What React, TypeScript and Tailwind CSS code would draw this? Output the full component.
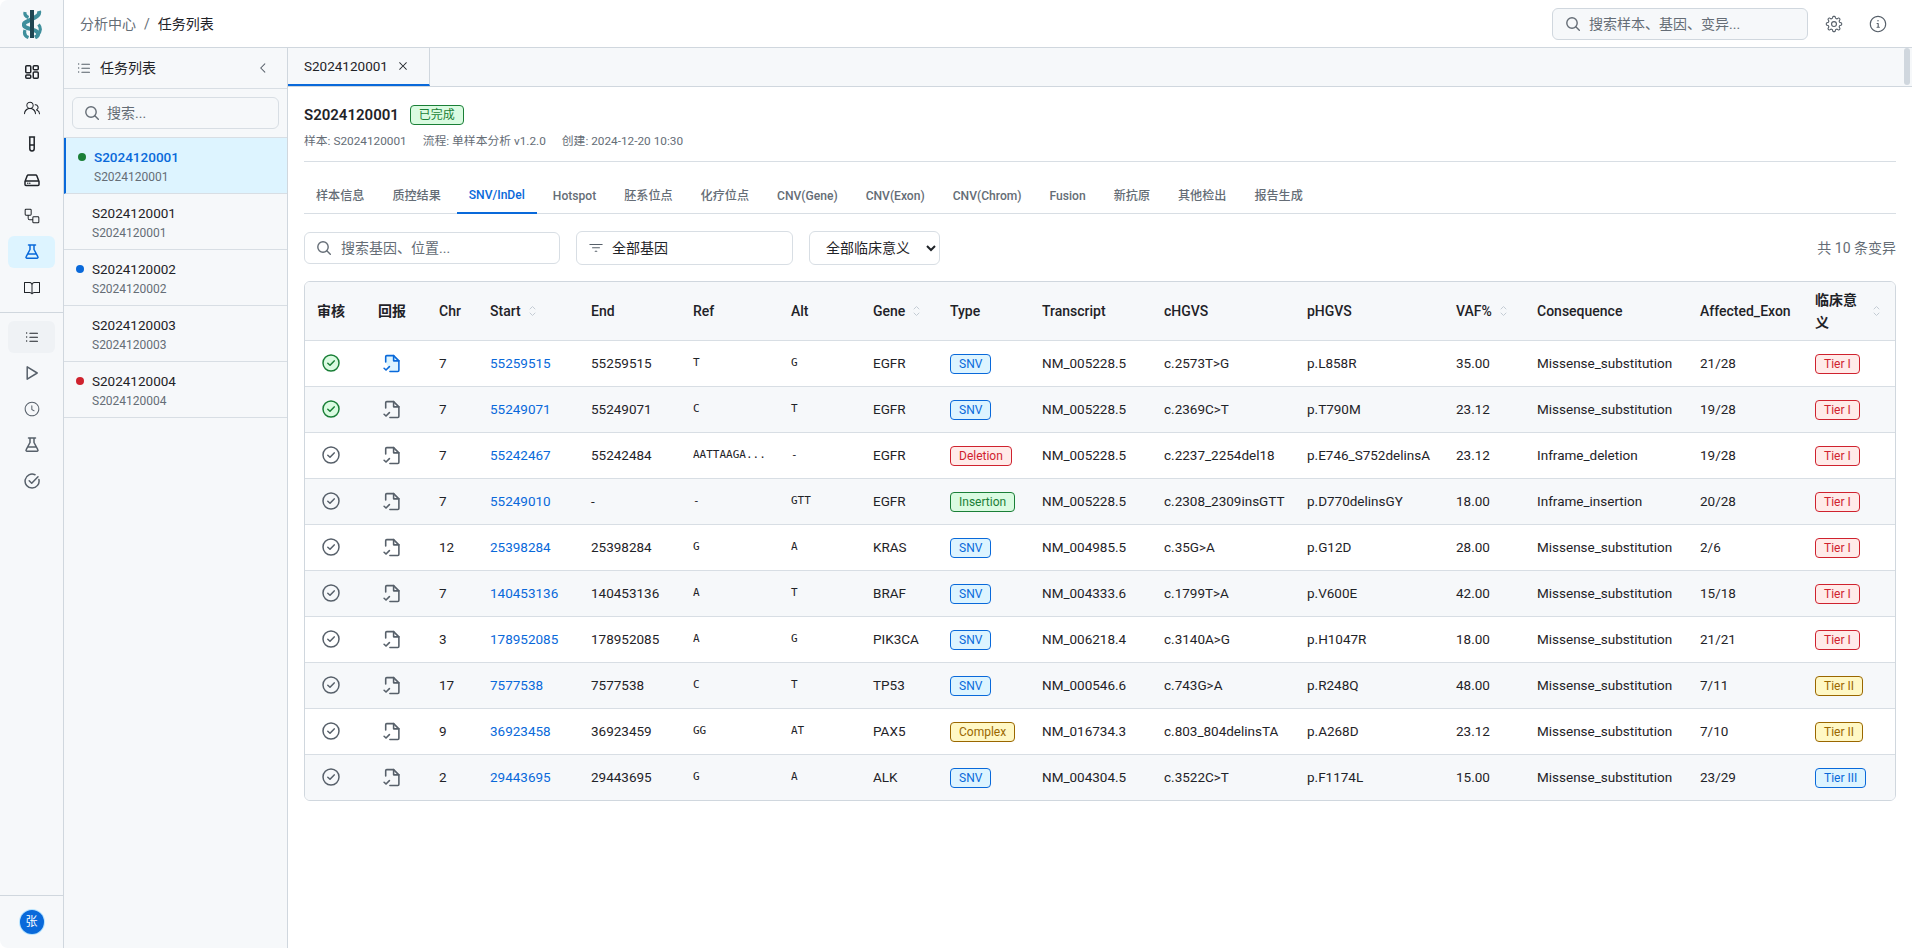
import React from "react";
import {
  GoBook,
  GoChevronLeft,
  GoClock,
  GoFilter,
  GoGear,
  GoInfo,
  GoListUnordered,
  GoPeople,
  GoWorkflow,
  GoX,
} from "react-icons/go";

const FONT = "[font-family:Roboto,'Noto_Sans_CJK_SC',sans-serif]";

const Apps = () => (
  <svg width="16" height="16" viewBox="0 0 16 16" fill="none" stroke="currentColor" strokeWidth="1.5" strokeLinejoin="round">
    <rect x="1.750" y="1.750" width="5" height="7" rx="1" />
    <rect x="9.250" y="1.750" width="5" height="4" rx="1" />
    <rect x="1.750" y="11" width="5" height="3.250" rx="1" />
    <rect x="9.250" y="8" width="5" height="6.250" rx="1" />
  </svg>
);

const Search = () => (
  <svg width="14" height="14" viewBox="0 0 14 14" fill="none" stroke="currentColor" strokeWidth="1.4" strokeLinecap="round" className="shrink-0">
    <circle cx="6" cy="6" r="5.200" />
    <path d="m9.800 9.800 3.500 3.500" />
  </svg>
);

const TestTube = () => (
  <svg width="16" height="16" viewBox="0 0 16 16" fill="none" stroke="currentColor" strokeWidth="1.5" strokeLinecap="round" strokeLinejoin="round">
    <path d="M5.500 1h5M5.800 1.200v11.500a2.200 2.200 0 0 0 4.400 0V1.200M5.800 9h4.400" />
  </svg>
);

const Drive = () => (
  <svg width="16" height="16" viewBox="0 0 16 16" fill="none" stroke="currentColor" strokeWidth="1.5" strokeLinecap="round" strokeLinejoin="round">
    <path d="M1 9.500 3.300 3.600a1 1 0 0 1 .9-.6h7.600a1 1 0 0 1 .9.6L15 9.500v3a1 1 0 0 1-1 1H2a1 1 0 0 1-1-1zM1.200 9h13.600" />
    <path d="M3.800 11.300h.01M5.800 11.300h.01" />
  </svg>
);

const Flask = () => (
  <svg width="16" height="16" viewBox="0 0 16 16" fill="none" stroke="currentColor" strokeWidth="1.5" strokeLinecap="round" strokeLinejoin="round">
    <path d="M4.500 1h7M6 1v4.500L2.200 12.600A1 1 0 0 0 3.100 14.200h9.800a1 1 0 0 0 .9-1.600L10 5.500V1M4.400 10h7.200" />
  </svg>
);

const PlayOutline = () => (
  <svg width="16" height="16" viewBox="0 0 16 16" fill="none" stroke="currentColor" strokeWidth="1.5" strokeLinejoin="round">
    <path d="M3.200 1.800v12.400L13.200 8z" />
  </svg>
);

const CheckOpen = () => (
  <svg width="16" height="16" viewBox="0 0 16 16" fill="none" stroke="currentColor" strokeWidth="1.5" strokeLinecap="round" strokeLinejoin="round">
    <path d="M14.900 6.500A7 7 0 1 1 11 1.700" />
    <path d="m5.200 7.800 2.500 2.400 6.300-6.500" />
  </svg>
);

const Sort = () => (
  <svg width="7" height="12" viewBox="0 0 7 12" fill="none" stroke="#c4ccd4" strokeWidth="1" strokeLinecap="round" strokeLinejoin="round" className="shrink-0">
    <path d="M1 4 3.500 1.500 6 4M1 8l2.500 2.500L6 8" />
  </svg>
);

const CheckDone = () => (
  <svg width="18" height="18" viewBox="0 0 18 18" fill="#dafbe1" stroke="#1a7f37" strokeWidth="1.500" strokeLinecap="round" strokeLinejoin="round" className="ml-[5px]">
    <circle cx="9" cy="9" r="8" />
    <path d="M5.800 9.300 8 11.300l4.200-4.400" fill="none" />
  </svg>
);

const CheckTodo = () => (
  <svg width="18" height="18" viewBox="0 0 18 18" fill="none" stroke="#57606a" strokeWidth="1.500" strokeLinecap="round" strokeLinejoin="round" className="ml-[5px]">
    <circle cx="9" cy="9" r="8" />
    <path d="M5.800 9.300 8 11.300l4.200-4.400" />
  </svg>
);

const FilledChecklist = () => (
  <svg width="17" height="19" viewBox="0 0 16 18" fill="none" stroke="#0969da" strokeWidth="1.5" strokeLinecap="round" strokeLinejoin="round" className="ml-[5px]">
    <path d="M2.500 7.500v-5a1 1 0 0 1 1-1h6.500L15 6.500v9a1 1 0 0 1-1 1H6.500" fill="#ddf4ff" />
    <path d="M10 1.500v5h5" />
    <path d="M1 13.500 2.800 15.200 6 12" />
  </svg>
);

const GrayChecklist = () => (
  <svg width="17" height="19" viewBox="0 0 16 18" fill="none" stroke="#57606a" strokeWidth="1.5" strokeLinecap="round" strokeLinejoin="round" className="ml-[5px]">
    <path d="M2.500 7.500v-5a1 1 0 0 1 1-1h6.500L15 6.500v9a1 1 0 0 1-1 1H6.500" />
    <path d="M10 1.500v5h5" />
    <path d="M1 13.500 2.800 15.200 6 12" />
  </svg>
);

const Logo = () => (
  <svg width="20" height="30" viewBox="0 0 20 30" fill="none">
    <path d="M3 3c-.6 2.500 1 4.500 3.500 5.500" stroke="#3f8f9c" strokeWidth="3.200" />
    <path d="M17 2c1 4-2 5.500-7 8S1 13.500 2 16.500 9 19.500 13 21.500s4.500 4.500 0 7" stroke="#3f8f9c" strokeWidth="4" />
    <path d="M16.500 15.500c2.500 3 2.500 7-.5 9.500" stroke="#3f8f9c" strokeWidth="3.200" />
    <path d="M3 21c-1 3-.5 6 3.500 7.500" stroke="#3f8f9c" strokeWidth="3.200" />
    <rect x="8" y="1" width="4" height="28" fill="#1f4652" />
  </svg>
);

const Badge = ({ text, tone }: { text: string; tone: string }) => {
  const tones: Record<string, string> = {
    blue: "bg-[#ddf4ff] border-[#0969da] text-[#0969da]",
    red: "bg-[#ffebe9] border-[#cf222e] text-[#cf222e]",
    green: "bg-[#dafbe1] border-[#1a7f37] text-[#1a7f37]",
    yellow: "bg-[#fff8c5] border-[#9a6700] text-[#9a6700]",
  };
  return (
    <span className={`inline-flex h-5 items-center rounded border px-2 text-xs ${tones[tone]}`}>{text}</span>
  );
};

const navTop = [
  { icon: <Apps /> },
  { icon: <GoPeople size={16} /> },
  { icon: <TestTube /> },
  { icon: <Drive /> },
  { icon: <GoWorkflow size={16} /> },
  { icon: <Flask />, active: true },
  { icon: <GoBook size={16} /> },
];

const tasks = [
  { id: "S2024120001", dot: "bg-[#1a7f37]", selected: true },
  { id: "S2024120001", dot: "" },
  { id: "S2024120002", dot: "bg-[#0969da]" },
  { id: "S2024120003", dot: "" },
  { id: "S2024120004", dot: "bg-[#cf222e]" },
];

const tabs = ["样本信息", "质控结果", "SNV/InDel", "Hotspot", "胚系位点", "化疗位点", "CNV(Gene)", "CNV(Exon)", "CNV(Chrom)", "Fusion", "新抗原", "其他检出", "报告生成"];

const columns = [
  { name: "审核", w: "w-[61px]", bold: true },
  { name: "回报", w: "w-[61px]", bold: true },
  { name: "Chr", w: "w-[51px]" },
  { name: "Start", w: "w-[101px]", sort: true },
  { name: "End", w: "w-[102px]" },
  { name: "Ref", w: "w-[98px]" },
  { name: "Alt", w: "w-[82px]" },
  { name: "Gene", w: "w-[77px]", sort: true },
  { name: "Type", w: "w-[92px]" },
  { name: "Transcript", w: "w-[122px]" },
  { name: "cHGVS", w: "w-[143px]" },
  { name: "pHGVS", w: "w-[149px]" },
  { name: "VAF%", w: "w-[81px]", sort: true },
  { name: "Consequence", w: "w-[163px]" },
  { name: "Affected_Exon", w: "w-[115px]" },
];

const rows = [
  ["7", "55259515", "55259515", "T", "G", "EGFR", "SNV", "NM_005228.5", "c.2573T>G", "p.L858R", "35.00", "Missense_substitution", "21/28", "Tier I"],
  ["7", "55249071", "55249071", "C", "T", "EGFR", "SNV", "NM_005228.5", "c.2369C>T", "p.T790M", "23.12", "Missense_substitution", "19/28", "Tier I"],
  ["7", "55242467", "55242484", "AATTAAGA...", "-", "EGFR", "Deletion", "NM_005228.5", "c.2237_2254del18", "p.E746_S752delinsA", "23.12", "Inframe_deletion", "19/28", "Tier I"],
  ["7", "55249010", "-", "-", "GTT", "EGFR", "Insertion", "NM_005228.5", "c.2308_2309insGTT", "p.D770delinsGY", "18.00", "Inframe_insertion", "20/28", "Tier I"],
  ["12", "25398284", "25398284", "G", "A", "KRAS", "SNV", "NM_004985.5", "c.35G>A", "p.G12D", "28.00", "Missense_substitution", "2/6", "Tier I"],
  ["7", "140453136", "140453136", "A", "T", "BRAF", "SNV", "NM_004333.6", "c.1799T>A", "p.V600E", "42.00", "Missense_substitution", "15/18", "Tier I"],
  ["3", "178952085", "178952085", "A", "G", "PIK3CA", "SNV", "NM_006218.4", "c.3140A>G", "p.H1047R", "18.00", "Missense_substitution", "21/21", "Tier I"],
  ["17", "7577538", "7577538", "C", "T", "TP53", "SNV", "NM_000546.6", "c.743G>A", "p.R248Q", "48.00", "Missense_substitution", "7/11", "Tier II"],
  ["9", "36923458", "36923459", "GG", "AT", "PAX5", "Complex", "NM_016734.3", "c.803_804delinsTA", "p.A268D", "23.12", "Missense_substitution", "7/10", "Tier II"],
  ["2", "29443695", "29443695", "G", "A", "ALK", "SNV", "NM_004304.5", "c.3522C>T", "p.F1174L", "15.00", "Missense_substitution", "23/29", "Tier III"],
];

const typeTone: Record<string, string> = { SNV: "blue", Deletion: "red", Insertion: "green", Complex: "yellow" };
const tierTone: Record<string, string> = { "Tier I": "red", "Tier II": "yellow", "Tier III": "blue" };

const cell = "px-3 align-middle";
const mono = "[font-family:'DejaVu_Sans_Mono',monospace] text-[11px]";

export default function App() {
  return (
    <div className={`flex h-screen w-full flex-col overflow-hidden rounded-lg bg-white text-[13.5px] text-[#1f2328] ${FONT}`}>
      <header className="flex h-12 shrink-0 items-center border-b border-[#d0d7de] bg-white pr-[18px]">
        <div className="flex h-full w-16 shrink-0 items-center justify-center border-r border-[#d0d7de] bg-[#f6f8fa]">
          <Logo />
        </div>
        <div className="ml-4 flex items-center gap-2 text-sm">
          <span className="text-[#656d76]">分析中心</span>
          <span className="text-[#656d76]">/</span>
          <span>任务列表</span>
        </div>
        <div className="ml-auto flex items-center gap-3">
          <div className="mr-[-2px] flex h-8 w-64 items-center gap-[9px] rounded-md border border-[#d0d7de] bg-[#f6f8fa] pl-[13px] text-sm text-[#656d76]">
            <Search />
            <span>搜索样本、基因、变异...</span>
          </div>
          <div className="flex size-8 items-center justify-center text-[#57606a]"><GoGear size={18} /></div>
          <div className="flex size-8 items-center justify-center text-[#57606a]"><GoInfo size={18} /></div>
        </div>
      </header>

      <div className="flex min-h-0 flex-1">
        <nav className="flex w-16 shrink-0 flex-col border-r border-[#d0d7de] bg-[#f6f8fa] text-[#1f2328]">
          <div className="flex flex-col gap-1 border-b border-[#d0d7de] p-2">
            {navTop.map((item, i) => (
              <div key={i} className={`flex h-8 items-center justify-center rounded-md ${item.active ? "bg-[#ddf4ff] text-[#0969da]" : ""}`}>
                {item.icon}
              </div>
            ))}
          </div>
          <div className="flex flex-col gap-1 p-2 text-[#57606a]">
            <div className="flex h-8 items-center justify-center rounded-md bg-[#eff2f5] text-[#1f2328]"><GoListUnordered size={16} /></div>
            <div className="flex h-8 items-center justify-center"><PlayOutline /></div>
            <div className="flex h-8 items-center justify-center"><GoClock size={16} /></div>
            <div className="flex h-8 items-center justify-center"><Flask /></div>
            <div className="flex h-8 items-center justify-center"><CheckOpen /></div>
          </div>
          <div className="mt-auto flex justify-center border-t border-[#d0d7de] pb-[14px] pt-[14px]">
            <div className="flex size-6 items-center justify-center rounded-full bg-[#0969da] text-xs text-white ring-1 ring-[#b6e3ff]">张</div>
          </div>
        </nav>

        <aside className="flex w-56 shrink-0 flex-col border-r border-[#d0d7de] bg-[#f6f8fa]">
          <div className="flex h-[41px] shrink-0 items-center border-b border-[#d8dee4] pl-3 pr-4">
            <GoListUnordered size={16} className="text-[#57606a]" />
            <span className="ml-2 text-sm">任务列表</span>
            <GoChevronLeft size={16} className="ml-auto text-[#57606a]" />
          </div>
          <div className="border-b border-[#d8dee4] px-2 py-2">
            <div className="flex h-8 items-center gap-2 rounded-md border border-[#d8dee4] bg-[#f6f8fa] pl-3 text-sm text-[#656d76]">
              <Search />
              <span>搜索...</span>
            </div>
          </div>
          {tasks.map((t, i) => (
            <div
              key={i}
              className={`flex h-14 shrink-0 items-start gap-2 border-b border-[#d8dee4] px-3 pt-[9px] ${t.selected ? "border-l-2 border-l-[#0969da] bg-[#ddf4ff]" : ""}`}
            >
              <span className={`mt-1.5 size-2 shrink-0 rounded-full ${t.dot}`} />
              <div className="min-w-0">
                <div className={`text-[13.5px] leading-5 ${t.selected ? "font-medium text-[#0969da]" : ""}`}>{t.id}</div>
                <div className="mt-[2px] text-xs leading-4 text-[#656d76]">{t.id}</div>
              </div>
            </div>
          ))}
        </aside>

        <main className="relative min-w-0 flex-1 bg-white">
          <div className="flex h-[39px] border-b border-[#d0d7de] bg-[#f6f8fa]">
            <div className="flex h-[38px] w-[142px] items-center gap-2 border-b-2 border-r border-b-[#0969da] border-r-[#d0d7de] px-4 text-[13.5px]">
              <span>S2024120001</span>
              <GoX size={14} className="text-[#1f2328]" />
            </div>
          </div>
          <div className="absolute right-0.5 top-0 h-[37px] w-1.5 rounded bg-[#d0d7de]" />

          <div className="px-4">
            <div className="flex h-[75px] flex-col border-b border-[#d8dee4] pt-[17px]">
              <div className="flex items-center gap-[11px]">
                <span className="text-[15px] font-semibold">S2024120001</span>
                <Badge text="已完成" tone="green" />
              </div>
              <div className="mt-1.5 flex gap-4 text-[11.8px] text-[#656d76]">
                <span>样本: S2024120001</span>
                <span>流程: 单样本分析 v1.2.0</span>
                <span>创建: 2024-12-20 10:30</span>
              </div>
            </div>

            <div className="mt-4 flex h-[36px] gap-1 border-b border-[#d8dee4]">
              {tabs.map((t) => (
                <div
                  key={t}
                  className={`flex h-[36px] items-center px-3 text-[12.1px] font-medium ${t === "SNV/InDel" ? "border-b-2 border-[#0969da] text-[#0969da]" : "text-[#656d76]"}`}
                >
                  {t}
                </div>
              ))}
            </div>

            <div className="mt-[17px] flex items-center">
              <div className="flex h-8 w-[256px] items-center gap-2.5 rounded-md border border-[#d8dee4] pl-3 text-sm text-[#656d76]">
                <Search />
                <span>搜索基因、位置...</span>
              </div>
              <div className="ml-4 flex h-[34px] w-[217px] items-center gap-2 rounded-md border border-[#d8dee4] pl-[11px] text-sm">
                <GoFilter size={16} className="text-[#57606a]" />
                <span>全部基因</span>
              </div>
              <select className="ml-4 h-[34px] w-[131px] rounded-md border border-[#d8dee4] bg-white pl-3 text-sm">
                <option>全部临床意义</option>
              </select>
              <span className="ml-auto text-sm text-[#656d76]">共 10 条变异</span>
            </div>

            <div className="mt-4 overflow-hidden rounded-md border border-[#d0d7de]">
              <table className="w-full table-fixed border-collapse">
                <thead>
                  <tr className="h-[58px] border-b border-[#d8dee4] bg-[#f6f8fa] text-left text-sm">
                    {columns.map((c) => (
                      <th key={c.name} className={`${cell} ${c.w} ${c.bold ? "font-semibold" : "font-medium"}`}>
                        <div className="flex items-center gap-2">
                          <span>{c.name}</span>
                          {c.sort && <Sort />}
                        </div>
                      </th>
                    ))}
                    <th className={`${cell} font-semibold`}>
                      <div className="flex items-center gap-1 leading-[22px]">
                        <span className="w-[54px]">临床意义</span>
                        <Sort />
                      </div>
                    </th>
                  </tr>
                </thead>
                <tbody>
                  {rows.map((r, i) => (
                    <tr key={i} className={`h-[46px] border-b border-[#d8dee4] last:border-b-0 ${i % 2 === 1 ? "bg-[#f6f8fa]" : "bg-white"}`}>
                      <td className={cell}>{i < 2 ? <CheckDone /> : <CheckTodo />}</td>
                      <td className={cell}>{i === 0 ? <FilledChecklist /> : <GrayChecklist />}</td>
                      <td className={cell}>{r[0]}</td>
                      <td className={`${cell} text-[#0969da]`}>{r[1]}</td>
                      <td className={cell}>{r[2]}</td>
                      <td className={`${cell} ${mono}`}>{r[3]}</td>
                      <td className={`${cell} ${mono}`}>{r[4]}</td>
                      <td className={cell}>{r[5]}</td>
                      <td className={cell}><Badge text={r[6]} tone={typeTone[r[6]]} /></td>
                      <td className={cell}>{r[7]}</td>
                      <td className={cell}>{r[8]}</td>
                      <td className={cell}>{r[9]}</td>
                      <td className={cell}>{r[10]}</td>
                      <td className={cell}>{r[11]}</td>
                      <td className={cell}>{r[12]}</td>
                      <td className={cell}><Badge text={r[13]} tone={tierTone[r[13]]} /></td>
                    </tr>
                  ))}
                </tbody>
              </table>
            </div>
          </div>
        </main>
      </div>
    </div>
  );
}
